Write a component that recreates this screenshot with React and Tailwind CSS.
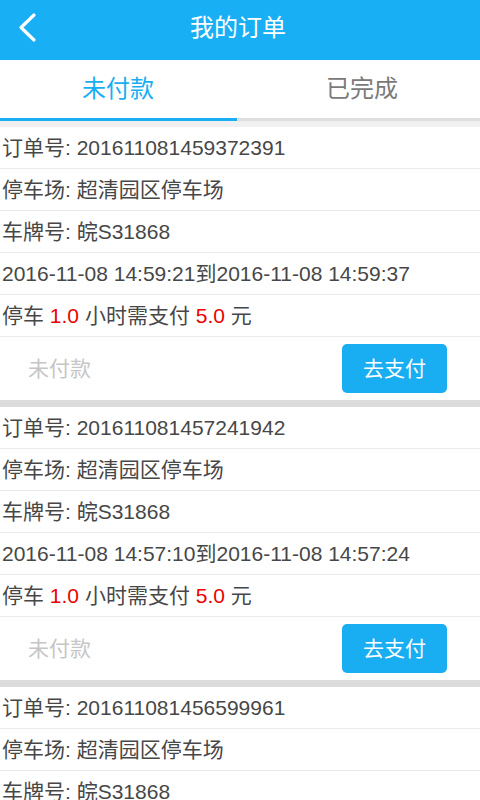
const orders = [
  {
    no: '201611081459372391',
    start: '2016-11-08 14:59:21',
    end: '2016-11-08 14:59:37',
  },
  {
    no: '201611081457241942',
    start: '2016-11-08 14:57:10',
    end: '2016-11-08 14:57:24',
  },
  {
    no: '201611081456599961',
    start: '2016-11-08 14:56:50',
    end: '2016-11-08 14:57:02',
  },
]

const Row = ({ children }) => (
  <div className="flex h-[42px] items-center border-b border-[#ebebeb] pl-[2px] text-[21px] text-[#474747]">
    {children}
  </div>
)

const OrderCard = ({ order }) => {
  return (
    <div className="bg-white">
      <Row>订单号: {order.no}</Row>
      <Row>停车场: 超清园区停车场</Row>
      <Row>车牌号: 皖S31868</Row>
      <Row>
        {order.start}到{order.end}
      </Row>
      <Row>
        停车&nbsp;<span className="text-[#ee0000]">1.0</span>&nbsp;小时需支付&nbsp;
        <span className="text-[#ee0000]">5.0</span>&nbsp;元
      </Row>
      <div className="flex h-[63px] items-center justify-between pl-[28px] pr-[33px]">
        <span className="text-[21px] text-[#c6c6c6]">未付款</span>
        <button className="h-[49px] w-[105px] rounded-[5px] bg-[#19aef2] text-[21px] text-white">
          去支付
        </button>
      </div>
      <div className="h-[7px] bg-[#dcdcdc]" />
    </div>
  )
}

export default function App() {
  return (
    <div
      className="h-[800px] w-[480px] overflow-hidden bg-white"
      style={{ fontFamily: '"Liberation Sans", "Noto Sans CJK SC", sans-serif' }}
    >
      <header className="relative flex h-[60px] items-center justify-center bg-[#19aff4]">
        <svg
          className="absolute left-[17px] top-[12px] h-[31px] w-[20px]"
          viewBox="0 0 20 31"
          fill="none"
          stroke="white"
          strokeWidth="3.2"
          strokeLinecap="round"
          strokeLinejoin="round"
        >
          <path d="M17 3 L4 15.5 L17 28" />
        </svg>
        <h1 className="pb-[4px] pr-[4px] text-[24px] text-white">我的订单</h1>
      </header>

      <div className="flex h-[58px]">
        <div className="flex flex-1 items-center justify-center pr-[8px] text-[24px] text-[#19aef2]">
          未付款
        </div>
        <div className="flex flex-1 items-center justify-center text-[24px] text-[#7a7a7a]">
          已完成
        </div>
      </div>
      <div className="flex h-[3px]">
        <div className="w-[237px] bg-[#19aef2]" />
        <div className="flex-1 bg-[#dedede]" />
      </div>
      <div className="h-[6px] bg-[#f0f0f0]" />

      {orders.map((order) => (
        <OrderCard key={order.no} order={order} />
      ))}
    </div>
  )
}
